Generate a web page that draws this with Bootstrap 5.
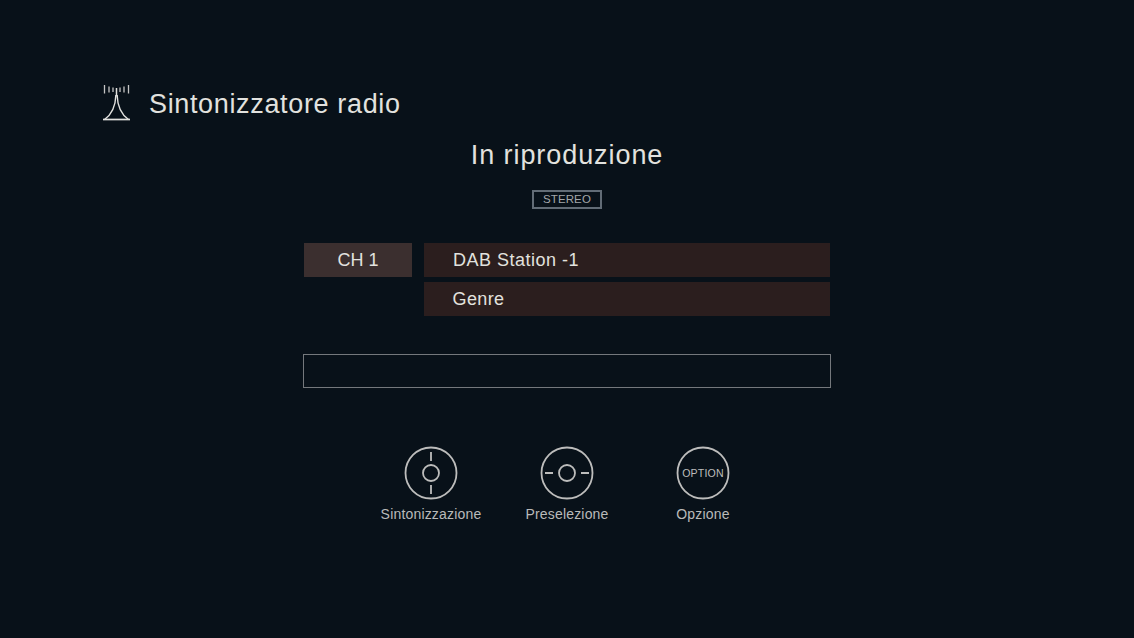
<!DOCTYPE html>
<html lang="it">
<head>
  <meta charset="UTF-8">
  <title>Sintonizzatore radio</title>
  <link href="https://cdn.jsdelivr.net/npm/bootstrap@5.3.0/dist/css/bootstrap.min.css" rel="stylesheet">
  <style>
    html, body { height: 100%; }
    body { background: #081119; color: #e2e2df; font-family: "Liberation Sans", Arial, sans-serif; overflow: hidden; }
    .screen { width: 1134px; height: 638px; padding-top: 85px; }
    .head-row { height: 38px; padding-left: 102px; gap: 18px; }
    .head-title { font-size: 27px; line-height: 38px; letter-spacing: .65px; margin: 0; font-weight: 400; }
    .play-title { font-size: 27px; line-height: 38px; letter-spacing: .93px; margin: 13px 0 0; font-weight: 400; text-align: center; }
    .stereo-tag { width: 70px; height: 19px; border: 2px solid #626c76; color: #a3a7aa; font-size: 11.5px; line-height: 15px; text-align: center; letter-spacing: .1px; margin: 16px auto 0; }
    .info-wrap { width: 526px; margin: 34px auto 0 304px; gap: 12px; }
    .ch-box { width: 108px; height: 34px; background: #3b2f2f; font-size: 18px; line-height: 34px; text-align: center; letter-spacing: 0; }
    .info-col { width: 406px; gap: 5px; }
    .info-line { height: 34px; background: #2b1e1e; font-size: 18px; line-height: 34px; padding-left: 29px; letter-spacing: .5px; }
    .info-line.genre-line { padding-left: 28.5px; letter-spacing: .4px; }
    .empty-bar { width: 528px; height: 34px; border: 1px solid #74787c; margin: 38px 0 0 303px; }
    .hint-row { margin-top: 58px; padding-left: 363px; }
    .hint-item { width: 136px; color: #b9bab9; font-size: 14px; line-height: 20px; letter-spacing: .18px; }
    .hint-item svg { display: block; margin-bottom: 4px; }
    .option-txt { font-family: "Liberation Sans", Arial, sans-serif; font-size: 10.6px; fill: #bdbdbc; }
  </style>
</head>
<body>
  <div class="screen">
    <div class="head-row d-flex align-items-center">
      <svg width="29" height="38" viewBox="0 0 29 38" fill="none" stroke="#e2e2df">
        <path d="M2.500 0v8.500M7 1.500v6M11 2.500v4.500M18 2.500v4.500M22 1.500v6M26.500 0v8.500" stroke="#c4c4c3" stroke-width="1.300"/>
        <path d="M14.500 3v8" stroke-width="1.500"/>
        <path d="M13.900 10C13.500 22 9 30 2.500 34.500M15.100 10C15.500 22 20 30 26.500 34.500" stroke-width="1.400"/>
        <path d="M1 34.500h27" stroke-width="1.700"/>
      </svg>
      <h1 class="head-title">Sintonizzatore radio</h1>
    </div>
    <h2 class="play-title">In riproduzione</h2>
    <div class="stereo-tag">STEREO</div>
    <div class="info-wrap d-flex">
      <div class="ch-box">CH 1</div>
      <div class="info-col d-flex flex-column">
        <div class="info-line">DAB Station -1</div>
        <div class="info-line genre-line">Genre</div>
      </div>
    </div>
    <div class="empty-bar"></div>
    <div class="hint-row d-flex">
      <div class="hint-item d-flex flex-column align-items-center">
        <svg width="54" height="54" viewBox="0 0 54 54" fill="none" stroke="#bdbdbc" stroke-width="1.800">
          <circle cx="27" cy="27" r="25.500"/><circle cx="27" cy="27" r="8"/><path d="M27 6v9M27 39v9"/>
        </svg>
        <span>Sintonizzazione</span>
      </div>
      <div class="hint-item d-flex flex-column align-items-center">
        <svg width="54" height="54" viewBox="0 0 54 54" fill="none" stroke="#bdbdbc" stroke-width="1.800">
          <circle cx="27" cy="27" r="25.500"/><circle cx="27" cy="27" r="8"/><path d="M5 27h8M41 27h8"/>
        </svg>
        <span>Preselezione</span>
      </div>
      <div class="hint-item d-flex flex-column align-items-center">
        <svg width="54" height="54" viewBox="0 0 54 54" fill="none" stroke="#bdbdbc" stroke-width="1.800">
          <circle cx="27" cy="27" r="25.500"/>
          <text class="option-txt" x="27" y="31" text-anchor="middle" stroke="none">OPTION</text>
        </svg>
        <span>Opzione</span>
      </div>
    </div>
  </div>
  <script src="https://cdn.jsdelivr.net/npm/bootstrap@5.3.0/dist/js/bootstrap.bundle.min.js"></script>
</body>
</html>
